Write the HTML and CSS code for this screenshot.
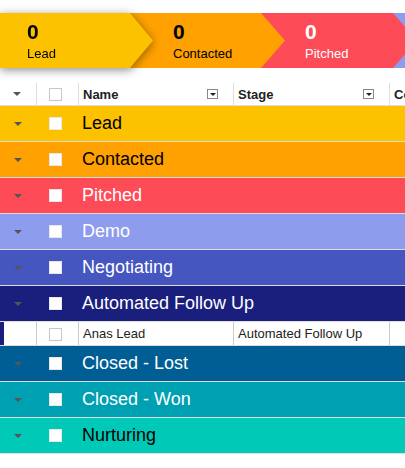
FILE: index.html
```html
<!DOCTYPE html>
<html>
<head>
<meta charset="utf-8">
<link rel="stylesheet" href="styles.css">
</head>
<body>
<div class="pipeline">
  <div class="stage-wrap lead-wrap">
    <div class="stage s-lead first"><div class="num">0</div><div class="lbl">Lead</div></div>
  </div>
  <div class="stage-wrap z3">
    <div class="stage s-contacted"><div class="num">0</div><div class="lbl">Contacted</div></div>
  </div>
  <div class="stage-wrap z2">
    <div class="stage s-pitched light"><div class="num">0</div><div class="lbl">Pitched</div></div>
  </div>
  <div class="stage-wrap z1">
    <div class="stage s-demo"></div>
  </div>
</div>

<div class="grid">
  <div class="row header">
    <div class="c c1"><span class="caret"></span></div>
    <div class="c c2"><span class="cb"></span></div>
    <div class="c c3"><span class="htext">Name</span><span class="filter"><span class="fcaret"></span></span></div>
    <div class="c c4"><span class="htext">Stage</span><span class="filter"><span class="fcaret"></span></span></div>
    <div class="c c5"><span class="htext">Co</span></div>
  </div>

  <div class="row group g-lead"><div class="c1"><span class="caret"></span></div><div class="c2"><span class="cb fill"></span></div><div class="glabel">Lead</div></div>
  <div class="row group g-contacted"><div class="c1"><span class="caret"></span></div><div class="c2"><span class="cb fill"></span></div><div class="glabel">Contacted</div></div>
  <div class="row group g-pitched light"><div class="c1"><span class="caret"></span></div><div class="c2"><span class="cb fill"></span></div><div class="glabel">Pitched</div></div>
  <div class="row group g-demo light"><div class="c1"><span class="caret"></span></div><div class="c2"><span class="cb fill"></span></div><div class="glabel">Demo</div></div>
  <div class="row group g-neg light"><div class="c1"><span class="caret"></span></div><div class="c2"><span class="cb fill"></span></div><div class="glabel">Negotiating</div></div>
  <div class="row group g-auto light"><div class="c1"><span class="caret"></span></div><div class="c2"><span class="cb fill"></span></div><div class="glabel">Automated Follow Up</div></div>

  <div class="row item">
    <div class="c c1"><span class="indicator"></span></div>
    <div class="c c2"><span class="cb"></span></div>
    <div class="c c3"><span class="itext">Anas Lead</span></div>
    <div class="c c4"><span class="itext">Automated Follow Up</span></div>
    <div class="c c5"></div>
  </div>

  <div class="row group g-lost light"><div class="c1"><span class="caret"></span></div><div class="c2"><span class="cb fill"></span></div><div class="glabel">Closed - Lost</div></div>
  <div class="row group g-won light"><div class="c1"><span class="caret"></span></div><div class="c2"><span class="cb fill"></span></div><div class="glabel">Closed - Won</div></div>
  <div class="row group g-nurt"><div class="c1"><span class="caret"></span></div><div class="c2"><span class="cb fill"></span></div><div class="glabel">Nurturing</div></div>
</div>
</body>
</html>
```

FILE: styles.css
```css
* { box-sizing: border-box; }
html, body { margin: 0; padding: 0; background: #fff; overflow: hidden; }
body {
  width: 405px;
  height: 468px;
  font-family: "Liberation Sans", Arial, sans-serif;
  color: #000;
}

/* pipeline */
.pipeline {
  display: flex;
  margin-top: 13px;
  height: 55px;
  width: 405px;
}
.stage-wrap {
  position: relative;
  flex: 0 0 auto;
  margin-left: -24px;
}
.lead-wrap {
  margin-left: 0;
  z-index: 5;
  filter: drop-shadow(0 2px 5px rgba(0,0,0,0.45));
}
.z3 { z-index: 3; }
.z2 { z-index: 2; }
.z1 { z-index: 1; }
.stage {
  width: 156px;
  height: 55px;
  padding-left: 44px;
  padding-top: 8px;
  clip-path: polygon(0 0, calc(100% - 24px) 0, 100% 50%, calc(100% - 24px) 100%, 0 100%);
}
.stage.first { width: 153px; padding-left: 27px; clip-path: polygon(0 0, calc(100% - 23px) 0, 100% 50%, calc(100% - 23px) 100%, 0 100%); }
.s-lead { background: #fcc200; }
.s-contacted { background: #ffa100; }
.s-pitched { background: #fd4b58; }
.s-demo { background: #8e9cee; width: 40px; clip-path: none; }
.num { font-size: 21px; font-weight: bold; line-height: 22px; }
.lbl { font-size: 13px; line-height: 16px; margin-top: 3px; }
.stage.light { color: #fff; }

/* grid */
.grid { margin-top: 15px; width: 405px; }
.row { display: flex; width: 405px; }
.c1 { flex: 0 0 37px; display: flex; align-items: center; justify-content: center; padding-right: 2px; }
.c2 { flex: 0 0 42px; display: flex; align-items: center; justify-content: flex-start; padding-left: 12px; }
.c3 { flex: 0 0 155px; }
.c4 { flex: 0 0 156px; }
.c5 { flex: 1 1 auto; overflow: hidden; white-space: nowrap; }

.header { height: 23px; border-bottom: 1px solid #ddd; }
.header .c { border-right: 1px solid #ddd; }
.header .c5 { border-right: none; }
.header .c3, .header .c4, .header .c5 {
  display: flex; align-items: center; justify-content: space-between;
  padding-left: 4px; padding-right: 15px;
}
.header .c5 { padding-right: 0; }
.htext { font-size: 13px; font-weight: bold; color: #222; }
.filter {
  width: 11px; height: 10px;
  border: 1px solid #888;
  display: flex; align-items: center; justify-content: center;
  background: #fff;
}
.fcaret {
  width: 0; height: 0;
  border-left: 3px solid transparent;
  border-right: 3px solid transparent;
  border-top: 3px solid #222;
}

.caret {
  width: 0; height: 0;
  border-left: 4px solid transparent;
  border-right: 4px solid transparent;
  border-top: 4px solid #555;
}
.cb { width: 13px; height: 13px; border: 1px solid #c8c8c8; background: #fff; margin-top: 1px; }
.cb.fill { width: 13px; height: 13px; border: 1px solid #e8e8e8; }

.group { height: 36px; border-bottom: 1px solid #dcdcdc; align-items: stretch; }
.group .c2 .cb { margin-top: 0; }
.glabel { font-size: 18px; line-height: 35px; padding-left: 3px; }
.group.light .glabel { color: #fff; }
.g-lead { background: #fcc200; }
.g-contacted { background: #ffa100; }
.g-pitched { background: #fd4b58; }
.g-demo { background: #8e9cee; }
.g-neg { background: #4556c0; }
.g-auto { background: #1a1e7d; }
.g-lost { background: #015e95; }
.g-won { background: #00a0b3; }
.g-nurt { background: #00c9b8; }

.item { height: 24px; border-bottom: 1px solid #ddd; background: #fff; }
.item .c { border-right: 1px solid #ccc; }
.item .c5 { border-right: none; }
.item .c1 { position: relative; }
.indicator { position: absolute; left: 0; top: 0; bottom: 0; width: 4px; background: #1a1e7d; }
.item .c3, .item .c4 { display: flex; align-items: center; padding-left: 4px; }
.itext { font-size: 13px; color: #222; }
```
